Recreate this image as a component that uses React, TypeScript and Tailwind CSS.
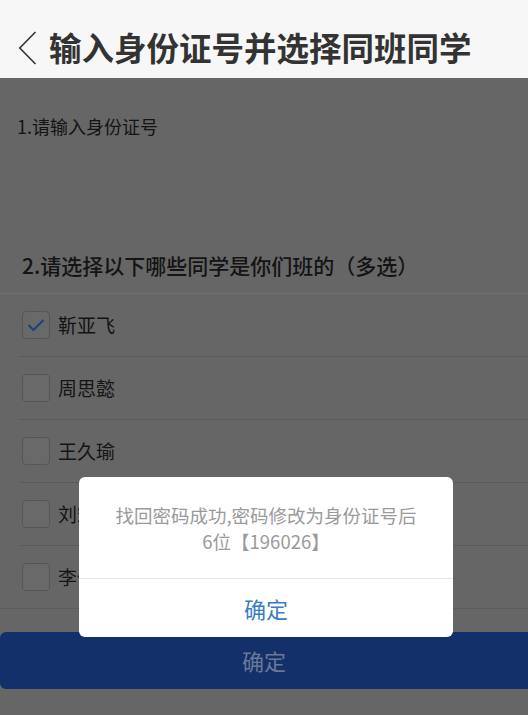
import React from "react";

const names = ["靳亚飞", "周思懿", "王久瑜", "刘宏", "李伟"];

export default function App() {
  return (
    <div
      className="relative w-[528px] h-[715px] overflow-hidden bg-[#666666]"
      style={{ fontFamily: '"Noto Sans CJK SC", "Noto Sans", sans-serif' }}
    >
      {/* header (not dimmed) */}
      <div className="h-[78px] bg-[#f7f7f7] flex items-center pt-[16px]">
        <svg width="19" height="34" viewBox="0 0 19 34" className="ml-[18px] mt-[2px]">
          <path d="M17.5 1 L1.8 17 L17.5 33" fill="none" stroke="#333" strokeWidth="1.6" />
        </svg>
        <div className="ml-[12px] text-[32.5px] leading-[36px] font-bold text-[#333333]">
          输入身份证号并选择同班同学
        </div>
      </div>

      {/* dimmed content */}
      <div className="pt-[36px] pl-[17px] text-[18px] leading-[24px] text-[#141414]">1.请输入身份证号</div>
      <div className="mt-[113px] pl-[22px] text-[21px] leading-[28px] font-medium text-[#141414] pb-[14px]">
        2.请选择以下哪些同学是你们班的（多选）
      </div>
      <div className="border-t border-[#6f6f6f]">
        {names.map((n, i) => (
          <div
            key={n}
            className={
              "h-[63px] flex items-center border-b " +
              (i === names.length - 1 ? "border-[#5c5c5c]" : "ml-[20px] border-[#5a5a5a]")
            }
          >
            <div
              className={
                "w-[28px] h-[28px] rounded-[4px] border border-[#565656] bg-[#696969] flex items-center justify-center " +
                (i === names.length - 1 ? "ml-[22px]" : "ml-[2px]")
              }
            >
              {i === 0 && (
                <svg width="18" height="14" viewBox="0 0 18 14">
                  <path d="M1.5 7 L6.5 12 L16.5 2" fill="none" stroke="#1c4478" strokeWidth="2.2" />
                </svg>
              )}
            </div>
            <div className="ml-[8px] text-[19px] leading-[28px] text-[#141414]">{n}</div>
          </div>
        ))}
      </div>
      <div className="mt-[23px] h-[57px] w-[540px] rounded-[6px] bg-[#13306a] flex items-center justify-center pr-[12px]">
        <span className="text-[22px] text-[#6b7896]">确定</span>
      </div>

      {/* dialog */}
      <div className="absolute left-[79px] top-[477px] w-[374px] rounded-[6px] bg-white overflow-hidden">
        <div className="pt-[25px] pb-[24px] px-[10px] text-center text-[18.5px] leading-[26px] text-[#9a9a9a]">
          找回密码成功,密码修改为身份证号后
          <br />
          6位【196026】
        </div>
        <div className="h-[59px] border-t border-[#e6e6e6] flex items-center justify-center">
          <span className="text-[22px] text-[#3a7bc8]">确定</span>
        </div>
      </div>
    </div>
  );
}
